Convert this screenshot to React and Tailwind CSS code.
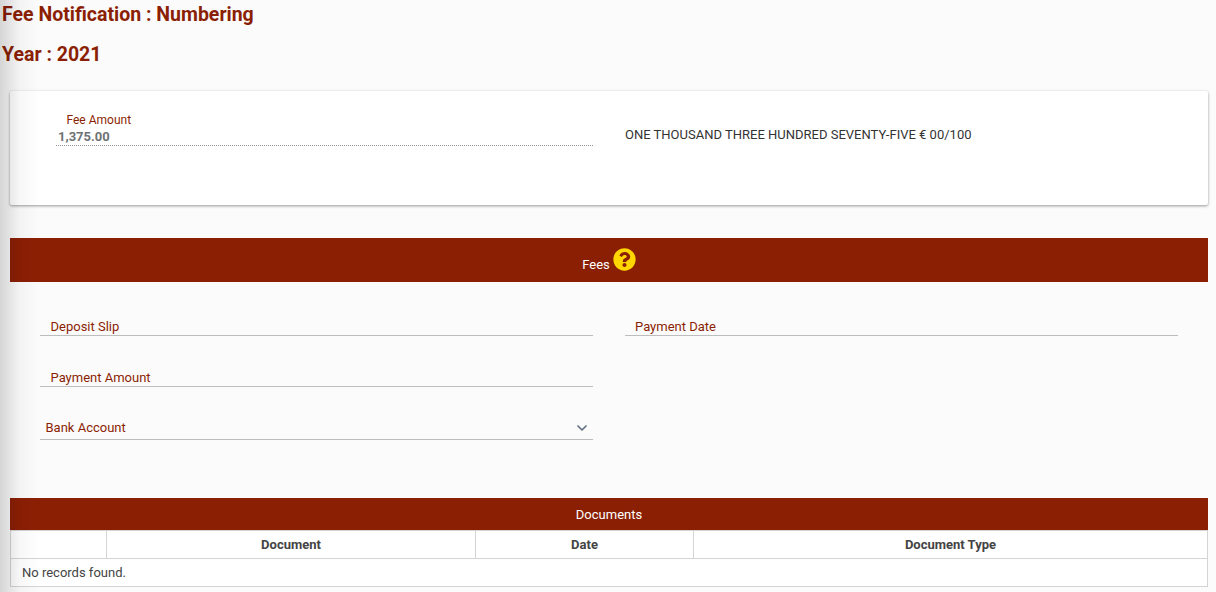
import React from 'react';
import { ChevronDown } from 'lucide-react';

const Field = ({ label, className = 'pl-[10.5px]' }) => (
  <div className={`h-[23px] border-b border-[#bdbdbd] pt-[3px] text-[13px] leading-[22px] text-[#8b1f04] ${className}`}>
    {label}
  </div>
);

const App = () => {
  return (
    <div className="relative h-[592px] w-[1216px] overflow-hidden bg-[#fbfbfb] font-['Roboto',sans-serif] text-[13px] text-[#333]">
      {/* left edge shadow */}
      <div className="pointer-events-none absolute inset-y-0 left-0 z-10 w-[40px] bg-gradient-to-r from-black/15 via-black/[0.03] to-transparent" />

      <h1 className="pl-[2px] pt-[3px] text-[19.5px] font-bold leading-[24px] text-[#8b1f04]">Fee Notification : Numbering</h1>
      <h2 className="pl-[2px] pt-[16px] text-[19.5px] font-bold leading-[24px] text-[#8b1f04]">Year : 2021</h2>

      {/* Fee amount card */}
      <div className="mx-[10px] mt-[24px] flex h-[114px] w-[1198px] rounded-[2px] bg-white pl-[46px] pt-[21px] shadow-[0_1px_3px_rgba(0,0,0,0.4)]">
        <div className="h-[34px] w-[537px] border-b border-dotted border-[#8f8f8f] pt-[1px]">
          <div className="pl-[10.5px] text-[12px] leading-[15px] text-[#8b1f04]">Fee Amount</div>
          <div className="pl-[2px] text-[13px] font-bold leading-[17px] text-[#6f7275]">1,375.00</div>
        </div>
        <div className="pl-[32px] pt-[15px] text-[13px] leading-[16px] text-[#333]">ONE THOUSAND THREE HUNDRED SEVENTY-FIVE € 00/100</div>
      </div>

      {/* Fees band */}
      <div className="mx-[10px] mt-[33px] flex h-[44px] w-[1198px] items-center justify-center bg-[#8b1f04] text-[13px] text-white">
        <span className="mt-[9px]">Fees</span>
        <svg viewBox="0 0 512 512" className="ml-[3px] mt-[-2px] h-[23px] w-[23px]" fill="#ffd600">
          <path d="M504 256c0 137-111 248-248 248S8 393 8 256 119 8 256 8s248 111 248 248zM263 90c-54 0-89 23-116 64-4 5-3 12 3 16l35 26c5 4 13 3 17-2 18-23 30-36 58-36 21 0 46 13 46 33 0 15-12 23-33 34-23 13-54 30-54 71v4c0 7 5 12 12 12h56c7 0 12-5 12-12v-1c0-29 83-30 83-106 0-57-59-103-119-103zm-7 244c-25 0-45 20-45 45s20 45 45 45 45-20 45-45-20-45-45-45z" />
        </svg>
      </div>

      {/* Payment form */}
      <div className="flex pl-[40px] pt-[31px]">
        <div className="w-[553px]">
          <Field label="Deposit Slip" />
          <Field label="Payment Amount" className="mt-[28px] pl-[10.5px]" />
          <div className="mt-[28px] flex h-[25px] items-center justify-between border-b border-[#bdbdbd] pl-[5.5px] pr-[3px] pt-[1px] text-[13px] text-[#8b1f04]">
            <span>Bank Account</span>
            <ChevronDown size={16} strokeWidth={2.5} className="text-[#5f6f7f]" />
          </div>
        </div>
        <div className="ml-[32px] w-[553px]">
          <Field label="Payment Date" className="pl-[10px]" />
        </div>
      </div>

      {/* Documents */}
      <div className="mx-[10px] mt-[58px] w-[1198px]">
        <div className="flex h-[32px] items-center justify-center bg-[#8b1f04] pt-[1px] text-[13px] text-white">Documents</div>
        <div className="border border-[#d4d4d4] bg-white">
          <div className="flex h-[28px] border-b border-[#d4d4d4] text-[13px] font-bold leading-[27px] text-[#444]">
            <div className="w-[96px] border-r border-[#d4d4d4]" />
            <div className="w-[369px] border-r border-[#d4d4d4] text-center">Document</div>
            <div className="w-[218px] border-r border-[#d4d4d4] text-center">Date</div>
            <div className="flex-1 text-center">Document Type</div>
          </div>
          <div className="h-[27px] pl-[11px] text-[13px] leading-[27px] text-[#444]">No records found.</div>
        </div>
      </div>
    </div>
  );
};

export default App;
